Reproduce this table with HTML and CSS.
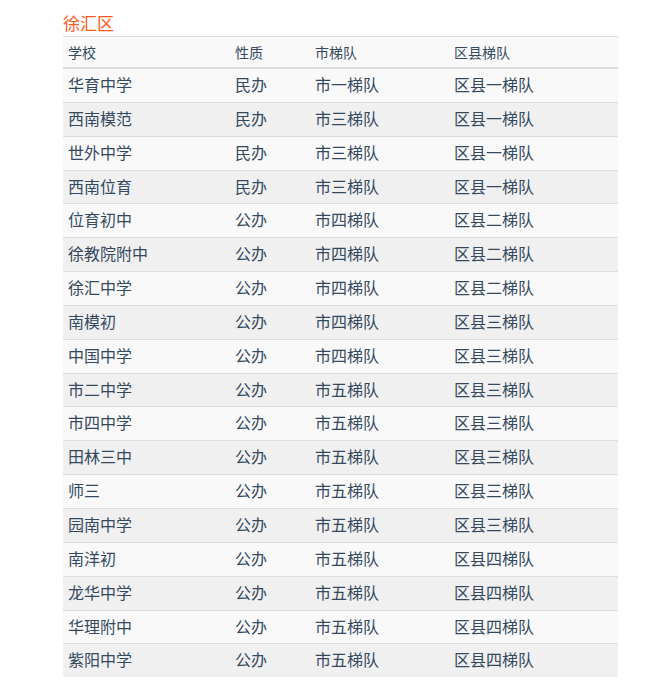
FILE: index.html
```html
<!DOCTYPE html>
<html lang="zh">
<head>
<meta charset="utf-8">
<title>徐汇区</title>
<link rel="stylesheet" href="styles.css">
</head>
<body>
<div class="wrap">
  <div class="title">徐汇区</div>
  <table class="tbl">
    <colgroup>
      <col class="c1"><col class="c2"><col class="c3"><col class="c4">
    </colgroup>
    <thead>
      <tr><th>学校</th><th>性质</th><th>市梯队</th><th>区县梯队</th></tr>
    </thead>
    <tbody>
      <tr><td>华育中学</td><td>民办</td><td>市一梯队</td><td>区县一梯队</td></tr>
      <tr><td>西南模范</td><td>民办</td><td>市三梯队</td><td>区县一梯队</td></tr>
      <tr><td>世外中学</td><td>民办</td><td>市三梯队</td><td>区县一梯队</td></tr>
      <tr><td>西南位育</td><td>民办</td><td>市三梯队</td><td>区县一梯队</td></tr>
      <tr><td>位育初中</td><td>公办</td><td>市四梯队</td><td>区县二梯队</td></tr>
      <tr><td>徐教院附中</td><td>公办</td><td>市四梯队</td><td>区县二梯队</td></tr>
      <tr><td>徐汇中学</td><td>公办</td><td>市四梯队</td><td>区县二梯队</td></tr>
      <tr><td>南模初</td><td>公办</td><td>市四梯队</td><td>区县三梯队</td></tr>
      <tr><td>中国中学</td><td>公办</td><td>市四梯队</td><td>区县三梯队</td></tr>
      <tr><td>市二中学</td><td>公办</td><td>市五梯队</td><td>区县三梯队</td></tr>
      <tr><td>市四中学</td><td>公办</td><td>市五梯队</td><td>区县三梯队</td></tr>
      <tr><td>田林三中</td><td>公办</td><td>市五梯队</td><td>区县三梯队</td></tr>
      <tr><td>师三</td><td>公办</td><td>市五梯队</td><td>区县三梯队</td></tr>
      <tr><td>园南中学</td><td>公办</td><td>市五梯队</td><td>区县三梯队</td></tr>
      <tr><td>南洋初</td><td>公办</td><td>市五梯队</td><td>区县四梯队</td></tr>
      <tr><td>龙华中学</td><td>公办</td><td>市五梯队</td><td>区县四梯队</td></tr>
      <tr><td>华理附中</td><td>公办</td><td>市五梯队</td><td>区县四梯队</td></tr>
      <tr><td>紫阳中学</td><td>公办</td><td>市五梯队</td><td>区县四梯队</td></tr>
    </tbody>
  </table>
</div>
</body>
</html>
```
FILE: styles.css
```css
html, body {
  margin: 0;
  padding: 0;
  background: #ffffff;
}
body {
  font-family: "Noto Sans CJK SC", "Noto Sans", sans-serif;
  color: #34495e;
}
.wrap {
  padding: 12px 40px 0 63px;
}
.title {
  font-size: 17px;
  line-height: 22px;
  height: 22px;
  margin-bottom: 2px;
  color: #ff5722;
}
.tbl {
  width: 555px;
  border-collapse: separate;
  border-spacing: 0;
  table-layout: fixed;
}
.c1 { width: 167px; }
.c2 { width: 80px; }
.c3 { width: 139px; }
.c4 { width: 169px; }
.tbl th {
  font-size: 14px;
  font-weight: normal;
  text-align: left;
  padding: 5px 5px;
  line-height: 20px;
  background: #f9f9f9;
  border-top: 1px solid #dddddd;
  border-bottom: 2px solid #dddddd;
}
.tbl td {
  font-size: 16px;
  padding: 4px 5px 6px;
  line-height: 1.428571;
  border-bottom: 1px solid #dddddd;
}
.tbl tbody tr:last-child td { border-bottom: 0; }
.tbl tbody tr:nth-child(odd) td { background: #f9f9f9; }
.tbl tbody tr:nth-child(even) td { background: #f0f0f0; }
```
